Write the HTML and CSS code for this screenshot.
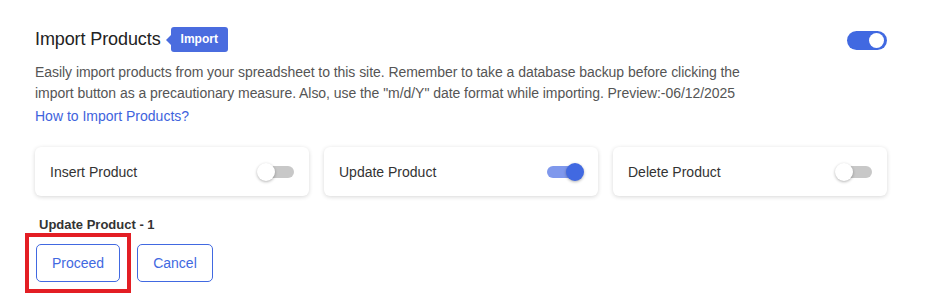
FILE: index.html
```html
<!DOCTYPE html>
<html lang="en">
<head>
    <meta charset="UTF-8">
    <meta name="viewport" content="width=device-width, initial-scale=1.0">
    <title>Import Products</title>
    <link rel="stylesheet" href="styles.css">
</head>
<body>
    <div class="panel">
        <div class="panel-head">
            <div class="title-wrap">
                <h2 class="title">Import Products</h2>
                <span class="badge">Import</span>
            </div>
            <span class="switch switch-on"><span class="knob"></span></span>
        </div>

        <p class="desc">Easily import products from your spreadsheet to this site. Remember to take a database backup before clicking the import button as a precautionary measure. Also, use the "m/d/Y" date format while importing. Preview:-06/12/2025</p>
        <a class="help-link" href="#">How to Import Products?</a>

        <div class="options">
            <div class="option-card">
                <span>Insert Product</span>
                <span class="toggle"><span class="dot"></span></span>
            </div>
            <div class="option-card">
                <span>Update Product</span>
                <span class="toggle toggle-on"><span class="dot"></span></span>
            </div>
            <div class="option-card">
                <span>Delete Product</span>
                <span class="toggle"><span class="dot"></span></span>
            </div>
        </div>

        <div class="summary">Update Product - 1</div>

        <div class="actions">
            <div class="highlight">
                <button class="btn">Proceed</button>
            </div>
            <button class="btn">Cancel</button>
        </div>
    </div>
</body>
</html>
```

FILE: styles.css
```css
body {
    margin: 0;
    font-family: "Liberation Sans", Arial, sans-serif;
    background: #fff;
    color: #333;
}

.panel {
    width: 852px;
    padding: 24px 0 0 35px;
}

.panel-head {
    display: flex;
    align-items: center;
    justify-content: space-between;
    height: 30px;
}

.title-wrap {
    display: flex;
    align-items: center;
}

.title {
    margin: 0;
    font-size: 18px;
    font-weight: normal;
    color: #222;
    letter-spacing: -0.1px;
}

.badge {
    position: relative;
    margin-left: 10px;
    background: #4a6cdf;
    color: #fff;
    font-size: 12px;
    font-weight: bold;
    padding: 0 10px;
    line-height: 25px;
    border-radius: 3px;
}

.badge::before {
    content: "";
    position: absolute;
    left: -5px;
    top: 8px;
    border-top: 5px solid transparent;
    border-bottom: 5px solid transparent;
    border-right: 5px solid #4a6cdf;
}

.switch {
    position: relative;
    width: 40px;
    height: 19px;
    border-radius: 10px;
    background: #4169e1;
    margin-top: 2px;
}

.switch .knob {
    position: absolute;
    right: 3px;
    top: 2px;
    width: 15px;
    height: 15px;
    border-radius: 50%;
    background: #fff;
}

.desc {
    margin: 8px 0 0;
    width: 740px;
    font-size: 14px;
    line-height: 21px;
    color: #555;
    letter-spacing: -0.05px;
}

.help-link {
    display: block;
    margin-top: 2px;
    font-size: 14px;
    line-height: 20px;
    color: #3e63dd;
    text-decoration: none;
}

.options {
    display: flex;
    gap: 15px;
    margin-top: 21px;
}

.option-card {
    flex: 1;
    display: flex;
    align-items: center;
    justify-content: space-between;
    height: 49px;
    padding: 0 15px;
    border-radius: 6px;
    background: #fff;
    box-shadow: 0 1px 4px rgba(0, 0, 0, 0.16);
    font-size: 14px;
    color: #333;
}

.toggle {
    position: relative;
    width: 36px;
    height: 12px;
    border-radius: 6px;
    background: #c8c8c8;
}

.toggle .dot {
    position: absolute;
    left: -1px;
    top: -3px;
    width: 18px;
    height: 18px;
    border-radius: 50%;
    background: #fff;
    box-shadow: 0 1px 3px rgba(0, 0, 0, 0.3);
}

.toggle-on {
    background: #7f98ec;
}

.toggle-on .dot {
    left: auto;
    right: -1px;
    background: #4169e1;
}

.summary {
    margin: 21px 0 0 4px;
    font-size: 13px;
    font-weight: bold;
    color: #333;
}

.actions {
    display: flex;
    align-items: center;
    gap: 6px;
    margin: 1px 0 0 -10px;
}

.highlight {
    border: 4px solid #e31e24;
    padding: 7px;
}

.btn {
    height: 38px;
    padding: 0 15px;
    border: 1px solid #4169e1;
    border-radius: 5px;
    background: #fff;
    color: #4169e1;
    font-family: inherit;
    font-size: 14px;
}
```
